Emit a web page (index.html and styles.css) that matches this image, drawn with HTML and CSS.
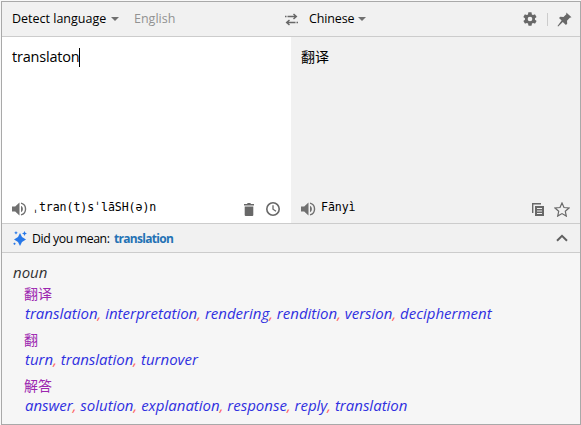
FILE: index.html
```html
<!DOCTYPE html>
<html lang="en">
<head>
<meta charset="utf-8">
<title>Translate</title>
<link rel="stylesheet" href="styles.css">
</head>
<body>
<main class="window">
  <header class="toolbar">
    <div class="source-lang"><span class="label detect">Detect language</span><i class="caret"></i><span class="label english">English</span>
      <svg class="swap" width="13" height="13" viewBox="0 0 13 13"><path d="M3 3.5h8M8.500 1l2.800 2.500L8.500 6M10 9.500H2M4.500 7L1.700 9.500l2.800 2.500" fill="none" stroke="#686868" stroke-width="1.500"/><path d="M0 3.500h1M1.500 3.500h1M10.500 9.500h1M12 9.500h1" stroke="#686868" stroke-width="1.500"/></svg>
    </div>
    <div class="target-lang"><span class="label chinese">Chinese</span><i class="caret"></i>
      <svg class="gear" width="16" height="16" viewBox="0 0 24 24"><path fill="#686868" d="M19.4 13c.1-.3.1-.7.1-1s0-.7-.1-1l2.1-1.6c.2-.2.2-.4.1-.6l-2-3.5c-.1-.2-.4-.3-.6-.2l-2.5 1c-.5-.4-1.1-.7-1.7-1l-.4-2.6c0-.3-.2-.5-.5-.5h-4c-.3 0-.4.2-.5.5l-.4 2.6c-.6.3-1.1.6-1.7 1l-2.5-1c-.2-.1-.5 0-.6.2l-2 3.5c-.1.2-.1.5.1.6L4.500 11c-.1.300-.1.700-.1 1s0 .7.100 1l-2.100 1.600c-.2.200-.2.400-.1.600l2 3.500c.1.200.4.300.6.200l2.500-1c.5.400 1.100.700 1.700 1l.4 2.600c.1.300.2.500.5.500h4c.3 0 .5-.2.500-.5l.4-2.600c.6-.3 1.200-.6 1.700-1l2.500 1c.2.100.5 0 .6-.2l2-3.500c.1-.2.1-.5-.1-.6zM12 15.500a3.500 3.500 0 1 1 0-7 3.500 3.500 0 0 1 0 7z"/></svg>
      <i class="divider"></i>
      <svg class="pin" width="15" height="15" viewBox="0 0 15 15"><path fill="#686868" d="M9.300.5l5.200 4.700-1.700.5-2.800 3 .2 3.100-1.300 1.200-3.100-3L1.200 14.500.5 13.900 4.600 8.600 2 5.900l1.300-1.200 3.200.2 2.800-2.700z"/></svg>
    </div>
  </header>
  <section class="editor">
    <div class="pane source">
      <div class="entry"><span class="label typed">translaton</span><i class="cursor"></i></div>
      <div class="tools">
        <svg class="speaker" width="15" height="14" viewBox="0 0 15 14"><path fill="#707070" d="M0 4.500h3.200L7.500.5v13l-4.300-4H0z"/><path d="M9 3.800a3.600 3.600 0 0 1 0 6.400z" fill="#707070"/><path d="M9 1.100a6.100 6.100 0 0 1 0 11.800" fill="none" stroke="#707070" stroke-width="1.400"/></svg>
        <span class="phonetic">ˌtran(t)sˈlāSH(ə)n</span>
        <svg class="trash" width="10" height="13" viewBox="0 0 10 13"><path fill="#686868" d="M0 1h3l.7-1h2.600l.7 1h3v1.500H0zM.7 3.500h8.600V12q0 1-1 1H1.700q-1 0-1-1z"/></svg>
        <svg class="clock" width="14" height="14" viewBox="0 0 14 14"><circle cx="7" cy="7" r="6.200" fill="none" stroke="#686868" stroke-width="1.600"/><path d="M7 3.200v4l3 2" fill="none" stroke="#686868" stroke-width="1.300"/></svg>
      </div>
    </div>
    <div class="pane target">
      <div class="entry"><span class="result">翻译</span></div>
      <div class="tools">
        <svg class="speaker" width="15" height="14" viewBox="0 0 15 14"><path fill="#707070" d="M0 4.500h3.200L7.500.5v13l-4.300-4H0z"/><path d="M9 3.800a3.600 3.600 0 0 1 0 6.400z" fill="#707070"/><path d="M9 1.100a6.100 6.100 0 0 1 0 11.800" fill="none" stroke="#707070" stroke-width="1.400"/></svg>
        <span class="phonetic">Fānyì</span>
        <svg class="copy" width="12" height="13" viewBox="0 0 12 13"><path d="M.7 10V.7H9" fill="none" stroke="#686868" stroke-width="1.400"/><path d="M3 3h9v10H3z" fill="#686868"/><path d="M5 5.500h5M5 8h5M5 10.500h5" stroke="#f0f0f0"/></svg>
        <svg class="star" width="16" height="15" viewBox="0 0 16 15"><path d="M8 1l2 4.500 5 .5-3.700 3.300 1 4.800L8 11.600l-4.300 2.500 1-4.800L1 6l5-.5z" fill="none" stroke="#686868" stroke-width="1.200"/></svg>
      </div>
    </div>
  </section>
  <section class="suggest">
    <svg class="sparkle" width="14" height="15" viewBox="0 0 14 15"><g fill="#2878e8"><path d="M7 2l2 4 4 2.500-4 2.500L7 15l-2-4-4-2.500L5 6zM11.500 0l.8 1.700L14 2.500l-1.700.8-.8 1.700-.8-1.700L9 2.500l1.700-.8z"/><path d="M3 0l.6 1.200 1.200.6-1.200.6L3 3.600l-.6-1.200-1.200-.6 1.200-.6zM1.500 11.500l1.300 1.300-1.300 1.300L.2 12.800z"/></g></svg>
    <span class="label question">Did you mean:</span><b class="label correction">translation</b>
    <svg class="chevron" width="12" height="8" viewBox="0 0 12 8"><path d="M1 6.700l5-4.900 5 4.900" fill="none" stroke="#606060" stroke-width="2"/></svg>
  </section>
  <section class="dictionary">
    <div class="pos">noun</div>
    <div class="term">翻译</div>
    <div class="words">translation<s>,</s> interpretation<s>,</s> rendering<s>,</s> rendition<s>,</s> version<s>,</s> decipherment</div>
    <div class="term">翻</div>
    <div class="words">turn<s>,</s> translation<s>,</s> turnover</div>
    <div class="term">解答</div>
    <div class="words">answer<s>,</s> solution<s>,</s> explanation<s>,</s> response<s>,</s> reply<s>,</s> translation</div>
  </section>
</main>
</body>
</html>
```
FILE: styles.css
```css
* { box-sizing: border-box; }
body { margin: 0; background: #f8f8f8; font-family: "Open Sans", "Noto Sans CJK SC", sans-serif; font-size: 12.5px; color: #000; }
.window { width: 580px; height: 424px; margin: 1px 0 0 1px; border: 1px solid #a9a9a9; background: #f6f6f6; overflow: hidden; }
svg { flex: none; display: block; }
.label { white-space: nowrap; flex: none; line-height: 18px; }
.toolbar { display: flex; height: 35px; background: #f1f1f1; border-bottom: 1px solid #ccc; }
.source-lang, .target-lang { display: flex; align-items: center; }
.source-lang { width: 289px; padding-left: 10px; }
.target-lang { flex: 1; padding: 0 8px 0 18px; }
.caret { border: 4px solid transparent; border-top-color: #707070; border-bottom: 0; }
.detect { width: 99px; }
.english { width: 45px; margin-left: 15px; color: #929292; }
.swap { margin-left: auto; margin-right: -7px; margin-top: 1px; }
.chinese { width: 49px; letter-spacing: -0.15px; }
.gear { margin-left: auto; }
.divider { width: 1px; height: 13px; background: #ccc; margin: 0 9px; }
.editor { display: flex; height: 187px; border-bottom: 1px solid #ccc; }
.pane { display: flex; flex-direction: column; justify-content: space-between; padding: 9px 10px 6px; }
.source { width: 289px; background: #fff; }
.target { flex: 1; background: #f1f1f1; }
.entry { display: flex; align-items: center; height: 22px; }
.typed { font-size: 14.5px; letter-spacing: -0.2px; }
.cursor { width: 1px; height: 19px; background: #000; }
.result { font: 14px/20px "Noto Sans CJK SC", sans-serif; margin-top: -2px; }
.tools { display: flex; align-items: center; height: 16px; }
.phonetic { font: 11.6px/16px "DejaVu Sans Mono", monospace; letter-spacing: -0.08px; margin: -4px auto 0 5px; white-space: pre; }
.trash { margin-right: 12px; }
.source .tools { padding-right: 1px; }
.copy { margin-right: 10px; }
.suggest { display: flex; align-items: center; height: 29px; padding: 0 12px 0 11px; background: #f1f1f1; border-bottom: 1px solid #ccc; }
.question { width: 82px; margin-left: 5px; font-size: 12.3px; letter-spacing: -0.42px; margin-top: 2px; }
.correction { color: #2472b4; font-size: 12px; letter-spacing: -0.7px; margin-top: 2px; }
.chevron { margin-left: auto; }
.dictionary { padding: 9px 0 0 11px; }
.pos, .words { font-size: 15px; font-style: italic; line-height: 20px; height: 20px; white-space: nowrap; }
.pos { color: #333; height: 22px; }
.term { margin-left: 11px; font: 14px/18px "Noto Sans CJK SC", sans-serif; color: #9c27b0; height: 19px; }
.words { margin: 0 0 7px 12px; color: #3030e0; }
.words s { color: #ff6464; text-decoration: none; }
```
